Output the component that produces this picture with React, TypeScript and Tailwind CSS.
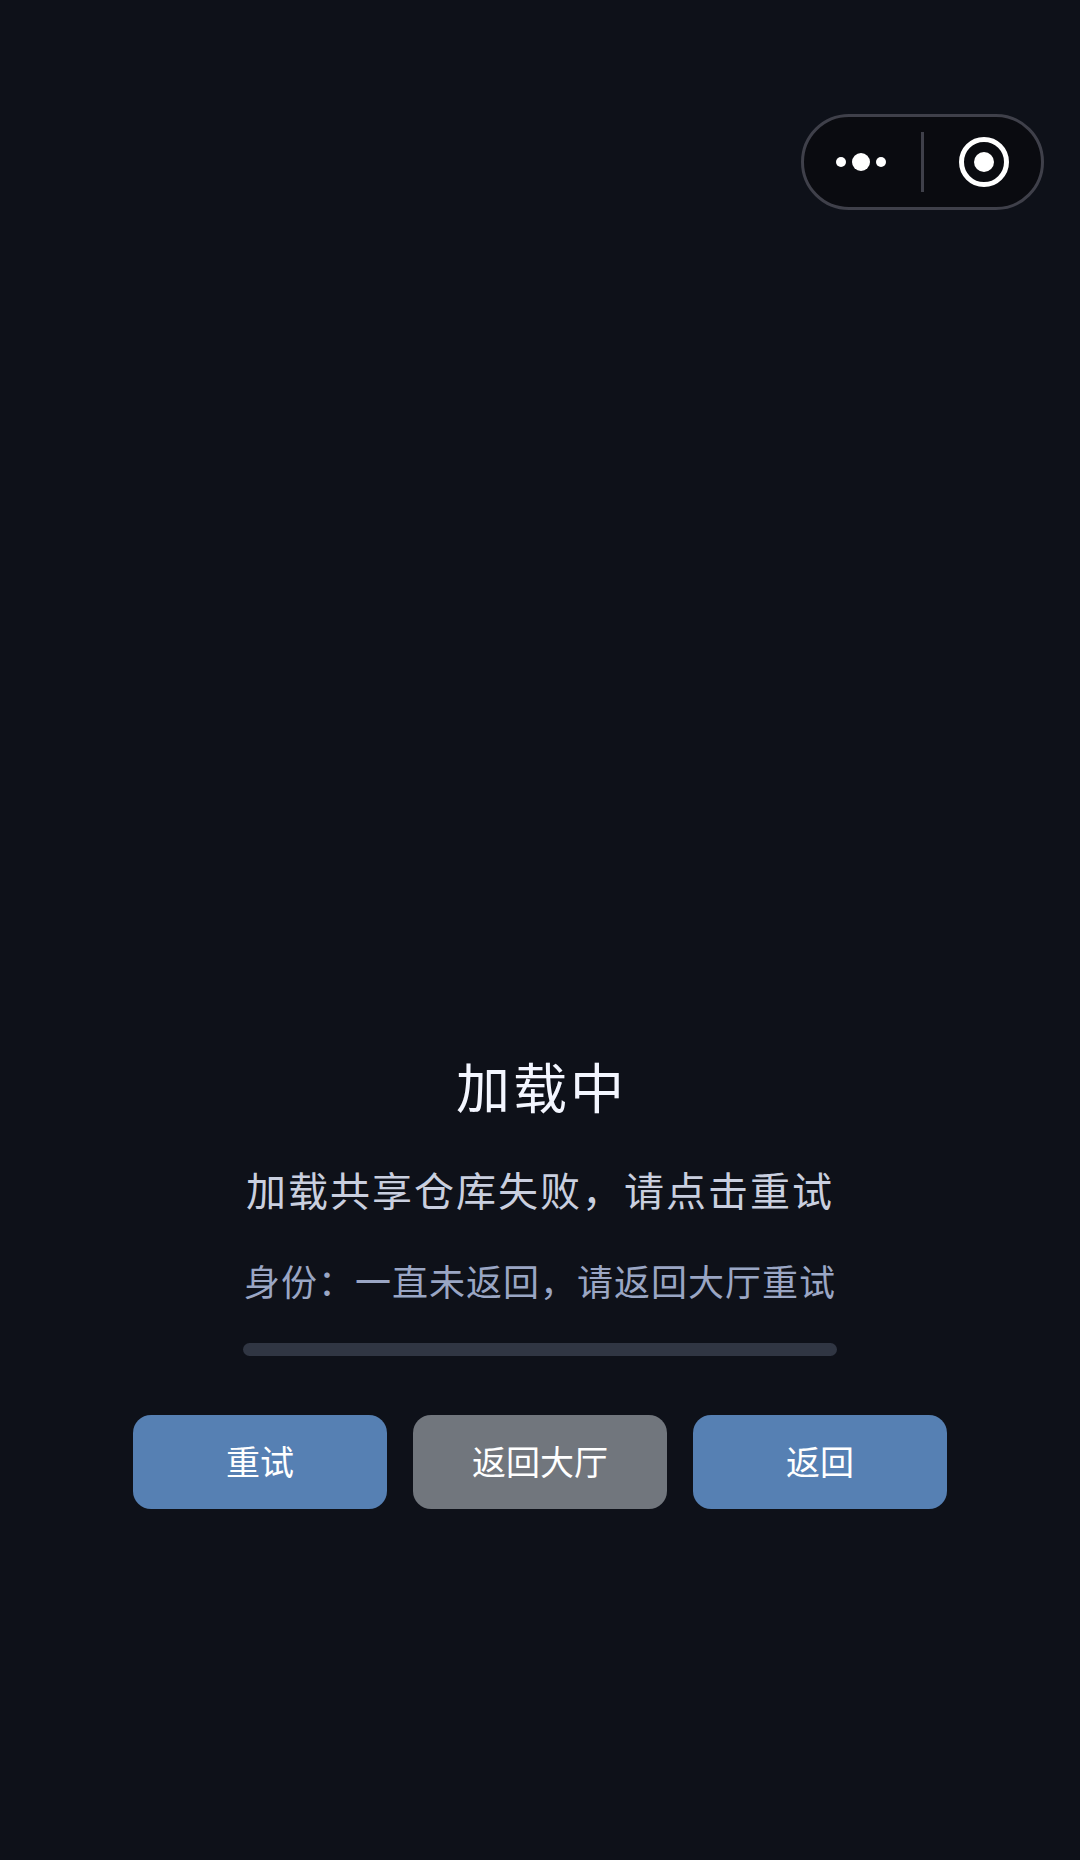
const font = { fontFamily: '"Noto Sans CJK SC", "Noto Sans", sans-serif' }

function CapsuleMenu() {
  return (
    <div className="flex h-[96px] w-[243px] items-center rounded-full border-[3px] border-[#3f404a] bg-[#0a0b10]">
      <div className="flex w-[116px] items-center justify-center gap-[6px] pr-[2px]">
        <span className="h-[10px] w-[10px] rounded-full bg-white" />
        <span className="h-[18px] w-[18px] rounded-full bg-white" />
        <span className="h-[10px] w-[10px] rounded-full bg-white" />
      </div>
      <div className="ml-[1px] h-[60px] w-[3px] bg-[#3f404a]" />
      <div className="flex flex-1 items-center justify-center pl-[3px]">
        <svg width="50" height="50" viewBox="0 0 50 50">
          <circle cx="25" cy="25" r="22.5" fill="none" stroke="#fff" strokeWidth="5" />
          <circle cx="25" cy="25" r="10" fill="#fff" />
        </svg>
      </div>
    </div>
  )
}

const buttons = [
  { label: '重试', cls: 'bg-[#5680b3]' },
  { label: '返回大厅', cls: 'bg-[#71767d]' },
  { label: '返回', cls: 'bg-[#5680b3]' },
]

export default function App() {
  return (
    <div className="flex h-[1860px] w-[1080px] flex-col overflow-hidden bg-[#0e1119]" style={font}>
      <div className="flex justify-end pr-[36px] pt-[114px]">
        <CapsuleMenu />
      </div>

      <div className="mt-[841px] flex flex-col items-center">
        <h1 className="h-[70px] pl-[3px] text-[54px] leading-[70px] font-normal tracking-[3px] text-[#f3f6ff]">加载中</h1>
        <p className="mt-[40px] h-[56px] text-[40px] leading-[56px] tracking-[2px] text-[#c9cfdf]">
          加载共享仓库失败，请点击重试
        </p>
        <p className="mt-[38px] h-[50px] text-[36px] leading-[50px] tracking-[1px] text-[#9aa6c4]">
          身份：一直未返回，请返回大厅重试
        </p>
        <div className="mt-[38px] h-[13px] w-[594px] rounded-full bg-[#303643]" />
        <div className="mt-[59px] flex gap-[26px]">
          {buttons.map((b) => (
            <button
              key={b.label}
              type="button"
              className={`h-[94px] w-[254px] rounded-[18px] pb-[3px] text-[34px] text-white ${b.cls}`}
            >
              {b.label}
            </button>
          ))}
        </div>
      </div>
    </div>
  )
}
